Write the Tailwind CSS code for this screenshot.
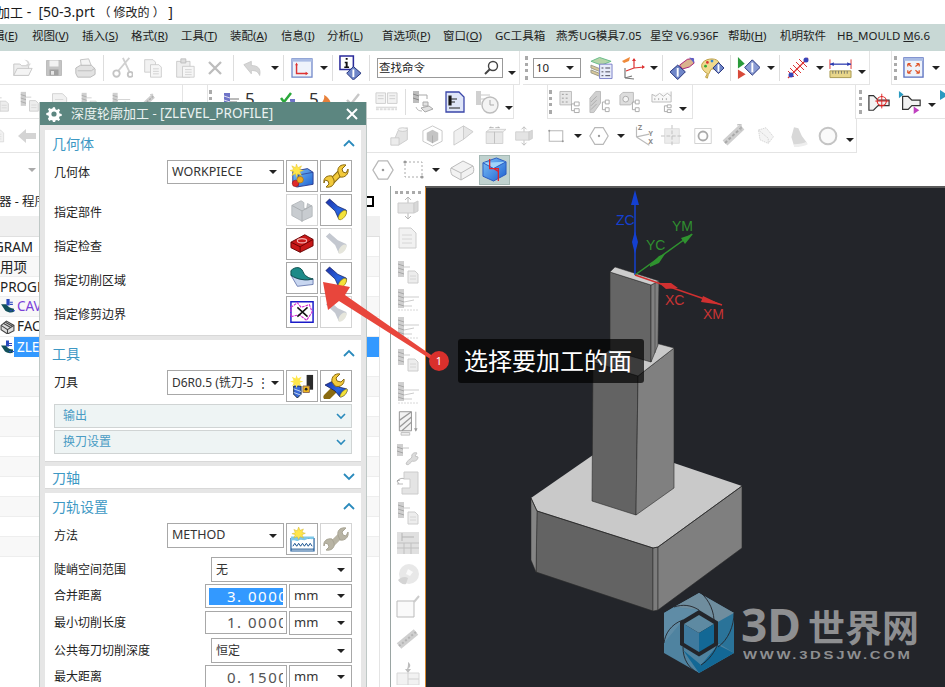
<!DOCTYPE html>
<html lang="zh">
<head>
  <meta charset="UTF-8" />
  <title>深度轮廓加工 - ZLEVEL_PROFILE</title>
  <script src="https://cdn.jsdelivr.net/npm/@tailwindcss/browser@4"></script>
</head>
<body class="[font-family:'Noto_Sans','Noto_Sans_CJK_SC',sans-serif] bg-white text-[#222]">

<!-- icon sheet -->
<svg class="absolute w-0 h-0">
  <defs>
    <linearGradient id="blueFace" x1="0" y1="0" x2="1" y2="1"><stop offset="0" stop-color="#7fc4f8"/><stop offset="1" stop-color="#1c5fd0"/></linearGradient>
    <linearGradient id="lamp" x1="0" y1="0" x2="1" y2="1"><stop offset="0" stop-color="#1a2fa8"/><stop offset=".6" stop-color="#2b66e0"/><stop offset="1" stop-color="#0a1c78"/></linearGradient>
    <symbol id="open" viewBox="0 0 24 24"><path d="M2 8h7l2 2h8v11H2z" fill="#eee" stroke="#c4c4c4"/><path d="M2 21l4-8h17l-4 8z" fill="#f4f4f4" stroke="#c4c4c4"/><path d="M14 3c4 0 6 2 6 5l2-1-3 4-3-3 2 0c0-2-2-4-4-5z" fill="#d8d8d8"/></symbol>
    <symbol id="save" viewBox="0 0 24 24"><path d="M2 2h20v20H2z" fill="#c4c4c4" stroke="#b0b0b0"/><path d="M6 2h12v8H6z" fill="#f2f2f2"/><path d="M6 14h12v8H6z" fill="#a0a0a0"/><path d="M8 16h4v5H8z" fill="#e4e4e4"/></symbol>
    <symbol id="print" viewBox="0 0 24 24"><path d="M7 3l9-1 3 8H8z" fill="#f4f4f4" stroke="#c2c2c2"/><path d="M2 12l5-3h12l4 4v6l-5 3H4l-2-4z" fill="#e2e2e2" stroke="#b8b8b8"/><path d="M4 15h15l4-3" fill="none" stroke="#bbb"/></symbol>
    <symbol id="cut" viewBox="0 0 24 24"><path d="M20 1L8 15M13 1l7 15" stroke="#d0d0d0" stroke-width="2" fill="none"/><circle cx="6" cy="18" r="3.500" fill="none" stroke="#c4c4c4" stroke-width="2"/><circle cx="21" cy="19" r="2.700" fill="none" stroke="#c4c4c4" stroke-width="2"/></symbol>
    <symbol id="copy" viewBox="0 0 24 24"><path d="M2 2h10l3 3v12H2z" fill="#f2f2f2" stroke="#c8c8c8"/><path d="M9 8h10l3 3v12H9z" fill="#f6f6f6" stroke="#c8c8c8"/><path d="M12 13h7M12 16h7M12 19h7" stroke="#ccc"/></symbol>
    <symbol id="paste" viewBox="0 0 24 24"><path d="M2 4h16v19H2z" fill="#eee" stroke="#c4c4c4"/><path d="M7 1h6v5H7z" fill="#ddd" stroke="#bbb"/><path d="M9 10h14v13H9z" fill="#f6f6f6" stroke="#c8c8c8"/><path d="M12 14h8M12 17h8M12 20h8" stroke="#ccc"/></symbol>
    <symbol id="ex" viewBox="0 0 24 24"><path d="M3 3l18 18M21 3L3 21" stroke="#bdbdbd" stroke-width="3.500"/></symbol>
    <symbol id="undo" viewBox="0 0 24 24"><path d="M1 8l9-4v5c7 0 12 3 10 12-2-5-5-6-10-6v4z" fill="#d6d6d6" stroke="#c8c8c8"/></symbol>
    <symbol id="wcs" viewBox="0 0 24 22"><path d="M1 1h22v20H1z" fill="#eef3fb" stroke="#6f86c8" stroke-width="1.400"/><path d="M1 1h22v3H1z" fill="#a9bbe4"/><path d="M6 7v10h11" stroke="#d33" stroke-width="1.600" fill="none"/><path d="M4.500 8l1.500-3 1.500 3zM16 15l3 2-3 2z" fill="#d33"/></symbol>
    <symbol id="info" viewBox="0 0 24 26"><path d="M1 1h14v14H1z" fill="#fff" stroke="#2a2a9a" stroke-width="1.600"/><path d="M7 3h2v2H7zM6 7h3v5h1.500v1.500h-5V12H7V8.500H6z" fill="#111"/><path d="M15 12l8 7-8 7-7-7z" fill="#6f86c8" stroke="#22307a"/><path d="M15 15v8" stroke="#fff" stroke-width="2"/></symbol>
    <symbol id="stack" viewBox="0 0 24 24"><path d="M1 5l9-4 12 4-10 4z" fill="#b5d5a8" stroke="#6b8"/><path d="M1 9l10 4v3L1 12zM1 14l10 4v3L1 17z" fill="#d9c89a" stroke="#998"/><path d="M10 8h13v15H10z" fill="#e8ecfa" stroke="#7a80c8"/><path d="M12 12h2M16 12h5M12 16h2M16 16h5M12 20h2M16 20h5" stroke="#445"/></symbol>
    <symbol id="axes" viewBox="0 0 24 24"><path d="M1 5l8-4-1 4-5 2z" fill="#ef8a3a"/><path d="M13 12V3M13 12l10-1M13 12l-8 3" stroke="#d33" fill="none" stroke-width="1.200"/><path d="M4 12v10M4 22l7-2M4 22l9 1" stroke="#777" fill="none" stroke-width="1.200"/><path d="M11 5l2-3 2 3zM21 9l3 2-3 2z" fill="#d33"/></symbol>
    <symbol id="hand" viewBox="0 0 26 24"><path d="M10 9l8-6 6-1 1 5-5 4-7 2z" fill="#d9b38c" stroke="#a27"/><path d="M20 1l5 1 0 5z" fill="#5a62c8"/><path d="M8 9l8 7-8 8-8-8z" fill="#6f86c8" stroke="#22307a"/><path d="M8 12v9" stroke="#fff" stroke-width="2"/></symbol>
    <symbol id="palette" viewBox="0 0 26 24"><path d="M2 8C4 2 16 0 20 5c3 4-2 9-7 8-2 0-2 4-4 6l-1 4-2-1 2-4C4 16 1 12 2 8z" fill="#f0d98e" stroke="#b89838"/><circle cx="8" cy="6" r="1.500" fill="#d33"/><circle cx="13" cy="4.500" r="1.500" fill="#38c"/><circle cx="6" cy="10" r="1.500" fill="#3a3"/><path d="M20 6l6 6-6 6-6-6z" fill="#6f86c8" stroke="#22307a"/><path d="M20 8v8" stroke="#fff" stroke-width="2"/></symbol>
    <symbol id="play" viewBox="0 0 24 24"><path d="M1 1l7 7-7 5z" fill="#2a9a3a"/><path d="M1 14l8 5-8 5z" fill="#d84a3a"/><path d="M16 4l8 8-8 8-8-8z" fill="#8a9cd4" stroke="#22307a"/><path d="M16 7v10" stroke="#fff" stroke-width="2"/></symbol>
    <symbol id="line" viewBox="0 0 24 24"><path d="M2 22L22 2" stroke="#d33" stroke-width="1.300"/><path d="M4 12l8 8M7 9l8 8M10 6l8 8M13 3l8 8M2 15l6 6" stroke="#d33"/><circle cx="5" cy="19" r="2.500" fill="#3a44b8"/><circle cx="20" cy="4" r="2.500" fill="#3a44b8"/></symbol>
    <symbol id="ruler" viewBox="0 0 24 24"><path d="M1 3v10M23 3v10" stroke="#d33"/><path d="M1 8h22" stroke="#2a3ab0" stroke-width="1.300"/><path d="M1 8l4-2v4zM23 8l-4-2v4z" fill="#2a3ab0"/><path d="M1 15h22v7H1z" fill="#e8d68a" stroke="#a89a50"/><path d="M4 15v3M7 15v3M10 15v3M13 15v3M16 15v3M19 15v3" stroke="#776"/></symbol>
    <symbol id="fit" viewBox="0 0 22 22"><path d="M1 1h20v20H1z" fill="#eef3fb" stroke="#5a70c0" stroke-width="1.400"/><path d="M1 1h20v3H1z" fill="#a9bbe4"/><path d="M5 7l4 3M17 7l-4 3M5 17l4-3M17 17l-4-3M5 7h3M5 7v3M17 7h-3M17 7v3M5 17h3M5 17v-3M17 17h-3M17 17v-3" stroke="#e0552a" stroke-width="1.300" fill="none"/></symbol>
    <!-- grey family for disabled commands -->
    <symbol id="gmill" viewBox="0 0 24 24"><path d="M2 1h6v19H2z" fill="#cfcfcf"/><path d="M2 4l6 2M2 8l6 2M2 12l6 2M2 16l6 2" stroke="#a8a8a8"/><path d="M8 9h15M8 14l10-2M8 18h8" stroke="#cdcdcd"/><path d="M2 22h20" stroke="#d8d8d8" stroke-dasharray="2 1"/></symbol>
    <symbol id="gmilldoc" viewBox="0 0 24 24"><path d="M2 1h6v16H2z" fill="#cfcfcf"/><path d="M2 4l6 2M2 8l6 2M2 12l6 2" stroke="#a8a8a8"/><path d="M8 7h6" stroke="#cdcdcd"/><path d="M12 11h7l3 3v9H12z" fill="#ededed" stroke="#cdcdcd"/><path d="M14 16h6M14 19h6" stroke="#d6d6d6"/></symbol>
    <symbol id="gtree" viewBox="0 0 24 24"><path d="M1 1h12v14H1z" fill="#e6e6e6" stroke="#bbb"/><path d="M3 4h2M7 4h2M3 8h2M7 8h2M3 12h2M7 12h2" stroke="#999"/><path d="M16 12h5v4h-5zM16 19h5v4h-5z" fill="#fff" stroke="#aaa"/><path d="M13 14v7h3M13 14h3" stroke="#aaa" fill="none"/></symbol>
    <symbol id="gdoc" viewBox="0 0 24 24"><path d="M3 2h12l5 5v15H3z" fill="#f1f1f1" stroke="#cdcdcd"/><path d="M6 9h10M6 13h10M6 17h10" stroke="#d6d6d6"/></symbol>
    <symbol id="gglass" viewBox="0 0 24 24"><path d="M1 3h10v11H1zM13 3h10v11H13z" fill="#f2f2f2" stroke="#cfcfcf"/><path d="M3 6h6M3 9h6M15 6h6M15 9h6M1 18h22" stroke="#cfcfcf"/><path d="M1 20h22" stroke="#ddd" stroke-dasharray="3 1" stroke-width="2"/></symbol>
    <symbol id="gclock" viewBox="0 0 24 24"><path d="M1 1h5v14H1z" fill="#d0d0d0"/><path d="M6 5h9M6 9h6" stroke="#c8c8c8"/><circle cx="15" cy="15" r="8" fill="#f4f4f4" stroke="#bdbdbd" stroke-width="1.400"/><path d="M15 10v5h4" stroke="#aaa" fill="none"/></symbol>
    <symbol id="gcyl" viewBox="0 0 24 24"><path d="M10 6l10-3v13l-8 5c-4 1-7-1-7-3z" fill="#e4e4e4" stroke="#ccc"/><ellipse cx="15" cy="5" rx="5" ry="2" fill="#f2f2f2" stroke="#ccc"/><path d="M2 14h9v8H2z" fill="#ececec" stroke="#ccc"/></symbol>
    <symbol id="gcube" viewBox="0 0 24 24"><path d="M2 7l10-5 10 5v11l-10 5-10-5z" fill="none" stroke="#c8c8c8"/><path d="M6 9l6-3 6 3v8l-6 3-6-3z" fill="#c4c4c4"/><path d="M12 12v8" stroke="#aaa"/></symbol>
    <symbol id="gslab" viewBox="0 0 24 24"><path d="M2 8l10-6v14l-10 6z" fill="#f0f0f0" stroke="#ccc"/><path d="M12 2l10 6-10 8z" fill="#e6e6e6" stroke="#ccc"/></symbol>
    <symbol id="gbox2" viewBox="0 0 24 24"><path d="M2 7h20v14H2z" fill="#e8e8e8" stroke="#ccc"/><path d="M2 7l4-3h20l-4 3z" fill="#f2f2f2" stroke="#ccc"/><path d="M12 7v14" stroke="#bbb"/><path d="M6 2h5M6 2l2-1M18 2h-5M18 2l-2-1" stroke="#aaa"/></symbol>
    <symbol id="gbox3" viewBox="0 0 24 24"><path d="M12 1v22M9 4l3-3 3 3M9 20l3 3 3-3" stroke="#b8b8b8" fill="none"/><path d="M2 7h16v10H2z" fill="#e4e4e4" stroke="#ccc"/><path d="M18 7l4-2v10l-4 2z" fill="#d8d8d8" stroke="#ccc"/></symbol>
    <symbol id="grect" viewBox="0 0 24 24"><path d="M3 5h18v14H3z" fill="none" stroke="#b8b8b8" stroke-width="1.400"/><circle cx="3" cy="5" r="1.300" fill="#999"/><circle cx="21" cy="19" r="1.300" fill="#999"/></symbol>
    <symbol id="ghex" viewBox="0 0 24 24"><path d="M7 2h10l6 10-6 10H7L1 12z" fill="none" stroke="#b8b8b8" stroke-width="1.400"/><circle cx="12" cy="12" r="1.400" fill="#999"/></symbol>
    <symbol id="gxyz" viewBox="0 0 24 24"><path d="M6 13V2M6 13l14-3M6 13l14 9" stroke="#bbb" stroke-width="1.300" fill="none"/></symbol>
    <symbol id="gpoint" viewBox="0 0 24 24"><path d="M4 4h16v16H4z" fill="#ececec" stroke="#ddd"/><path d="M12 0v24M0 12h24" stroke="#bbb" stroke-dasharray="4 2"/></symbol>
    <symbol id="gring" viewBox="0 0 24 24"><path d="M1 2h22v20H1z" fill="none" stroke="#c4c4c4"/><circle cx="12" cy="12" r="6" fill="none" stroke="#aaa" stroke-width="2.400"/></symbol>
    <symbol id="gtext" viewBox="0 0 24 24"><path d="M3 19L20 3" stroke="#cfcfcf" stroke-width="7"/><path d="M3 19L20 3" stroke="#a8a8a8" stroke-width="2" stroke-dasharray="3 2"/><path d="M15 1l4-1v7" stroke="#bbb" fill="none"/></symbol>
    <symbol id="gwire" viewBox="0 0 24 24"><path d="M2 4l10-3 10 12-7 9-11-5z" fill="#f4f4f4" stroke="#ccc" stroke-dasharray="2 1"/><path d="M2 4l13 11v7" stroke="#ccc" fill="none" stroke-dasharray="2 1"/></symbol>
    <symbol id="glamp" viewBox="0 0 24 24"><path d="M8 2l5 1 4 9 6 8c-5 3-10 3-15 3l-3-10z" fill="#d8d8d8"/><path d="M8 23c5 0 10 0 15-3" stroke="#eee" stroke-width="3" fill="none"/></symbol>
    <symbol id="gcircle" viewBox="0 0 24 24"><circle cx="12" cy="12" r="10" fill="#fafafa" stroke="#c4c4c4" stroke-width="2.400"/></symbol>
    <symbol id="gtable" viewBox="0 0 24 24"><path d="M1 1h22v22H1z" fill="#e0e0e0"/><path d="M1 12h22M1 17h22M8 12v11M15 12v11" stroke="#c0c0c0"/><path d="M6 2v8M6 6h12" stroke="#b4b4b4"/></symbol>
    <symbol id="gglobe" viewBox="0 0 24 24"><circle cx="13" cy="11" r="10" fill="#e8e8e8"/><path d="M2 17c3-3 7-4 10-2l-2 6c-3 1-6-1-8-4z" fill="#d4d4d4"/><path d="M12 6l5 3-3 4-4-2z" fill="#fafafa"/></symbol>
    <symbol id="gapen" viewBox="0 0 24 24"><path d="M1 6h17v16H1z" fill="#fafafa" stroke="#bbb"/><path d="M18 7l5-6" stroke="#ccc" stroke-width="2"/></symbol>
    <symbol id="gbar" viewBox="0 0 24 24"><path d="M3 18L20 4" stroke="#cfcfcf" stroke-width="7"/><path d="M3 18L20 4" stroke="#b4b4b4" stroke-dasharray="2 2" stroke-width="2"/></symbol>
    <symbol id="gfold" viewBox="0 0 24 24"><path d="M1 12h22v12H1z" fill="#f2f2f2" stroke="#d8d8d8"/><path d="M12 12v12M12 18h11" stroke="#d0d0d0"/><path d="M12 1c3 2 3 5 0 7l3 0-3 4-3-4h2c1-2 1-4 1-7z" fill="#bdbdbd"/></symbol>
    <symbol id="gwrmill" viewBox="0 0 24 24"><path d="M1 1h6v12H1z" fill="#cfcfcf"/><path d="M1 4l6 2M1 8l6 2" stroke="#a4a4a4"/><path d="M7 5h6" stroke="#c4c4c4"/><path d="M10 21c1-4 4-4 6-7-1-3 2-5 5-4l-2 3 3 1c0 3-3 5-6 4-2 2-3 5-6 3z" fill="#dcdcdc" stroke="#c4c4c4"/></symbol>
    <symbol id="gmach" viewBox="0 0 24 24"><path d="M8 1h14v22H6V17h8V8H8z" fill="#e4e4e4" stroke="#ccc"/><path d="M1 10c3-3 6-3 7-2M1 10l2 3M1 10l3-1" stroke="#aaa" fill="none"/><path d="M1 13h6" stroke="#bbb"/></symbol>
    <symbol id="ghatch" viewBox="0 0 24 30"><path d="M2 2h14v22H2z" fill="#f2f2f2" stroke="#888"/><path d="M2 12L16 2M2 20L16 8M5 24l11-10" stroke="#999" stroke-width="1.500"/><path d="M4 26h10v3H4z" fill="#eee" stroke="#bbb"/><path d="M21 2v22" stroke="#999"/><path d="M19 21l2 4 2-4z" fill="#999"/></symbol>
    <!-- coloured dialog buttons -->
    <symbol id="geoNew" viewBox="0 0 26 26"><path d="M3 8l16-3 6 4v13l-18 3-4-4z" fill="url(#blueFace)" stroke="#2a3a90"/><path d="M3 8l6 4 16-3M9 12v13" stroke="#2a3a90" fill="none" stroke-width=".8"/><path d="M7 0l1.500 4 4-2-2 4 4 1-4 1.500 2 4-4-2-1.500 4L6 10.500l-4 2 2-4L0 7l4-1-2-4 4 2z" fill="#ffe64a" stroke="#e8c020" stroke-width=".5"/><circle cx="6" cy="21" r="3.500" fill="#e02a2a" stroke="#901010" stroke-width=".6"/><circle cx="11" cy="17" r="3.500" fill="#f0a81e" stroke="#a06a00" stroke-width=".6"/></symbol>
    <symbol id="wrench" viewBox="0 0 26 26"><path d="M7 20L17 10" stroke="#8a6a10" stroke-width="6.500"/><path d="M7 20L17 10" stroke="#f2c93a" stroke-width="4.500"/><path d="M15 9c-1-5 3-8 8-7l-4 4 1 3 3 1 2-4c1 5-3 9-8 8z" fill="#f2c93a" stroke="#8a6a10"/><path d="M11 17c1 5-3 8-8 7l3-3-1-3-3-1-1 3c-1-5 3-8 8-7z" fill="#f2c93a" stroke="#8a6a10"/></symbol>
    <symbol id="wrenchG" viewBox="0 0 26 26"><path d="M7 20L17 10" stroke="#b8b4a4" stroke-width="6"/><path d="M15 9c-1-5 3-8 8-7l-4 4 1 3 3 1 2-4c1 5-3 9-8 8z" fill="#b8b4a4" stroke="#a8a494"/><path d="M11 17c1 5-3 8-8 7l3-3-1-3-3-1-1 3c-1-5 3-8 8-7z" fill="#b8b4a4" stroke="#a8a494"/></symbol>
    <symbol id="blockG" viewBox="0 0 26 26"><path d="M2 8l10-5 3 2v6l3 1 1-6 5 3v11l-11 5-11-6z" fill="#c8ccd0" stroke="#b4b8bc"/><path d="M2 8l11 6v12M13 14l11-6" stroke="#a8acb0" fill="none"/></symbol>
    <symbol id="lamp1" viewBox="0 0 26 26"><path d="M2 5l4-4 9 8 9 4c2 3-3 10-8 10l-4-9z" fill="url(#lamp)" stroke="#0a1454" stroke-width=".7"/><ellipse cx="20" cy="18.500" rx="6" ry="3" transform="rotate(-52 20 18.500)" fill="#f4e23a" stroke="#a89410" stroke-width=".7"/></symbol>
    <symbol id="lamp0" viewBox="0 0 26 26"><path d="M2 5l4-4 9 8 9 4c2 3-3 10-8 10l-4-9z" fill="#c4c8d0"/><ellipse cx="20" cy="18.500" rx="6" ry="3" transform="rotate(-52 20 18.500)" fill="#e6e6dc"/></symbol>
    <symbol id="redPart" viewBox="0 0 26 26"><path d="M1 11l15-8 9 5v7l-14 7-10-5z" fill="#c81818" stroke="#600"/><path d="M1 11l10 5 14-8M11 16v6" stroke="#600" fill="none"/><ellipse cx="13" cy="9.500" rx="5" ry="2.300" fill="none" stroke="#f4b0b0" stroke-width="1.300"/></symbol>
    <symbol id="surf" viewBox="0 0 26 26"><path d="M1 10L8 22L25 20V14C18 16 8 15 1 10z" fill="#c8d6f0" stroke="#6a7cb0"/><path d="M1 10V5C6 0 12 1 14 6C16 11 20 13 25 14C18 16 8 15 1 10z" fill="#1c8a88" stroke="#0c4a48"/></symbol>
    <symbol id="trim" viewBox="0 0 26 26"><path d="M1 2h24v22H1z" fill="#fff" stroke="#1a1ac8" stroke-width="1.600"/><path d="M1 8l7-5 4 5 9-3 3 8-6 9-8-6-9 2z" fill="none" stroke="#d028d0" stroke-width="1.200" stroke-dasharray="3 1"/><path d="M8 8l11 10M19 8L8 18" stroke="#111" stroke-width="1.600"/></symbol>
    <symbol id="toolNew" viewBox="0 0 26 26"><path d="M18 1h7v16h-7z" fill="#2a2a2a"/><path d="M14 13h7v7h-7z" fill="#f2b81e" stroke="#865"/><circle cx="17.500" cy="16.500" r="1.500" fill="#222"/><path d="M4 13h8v9l-4 4-4-4z" fill="#3a6ad8" stroke="#123"/><path d="M4 16l8 3M4 20l8 3" stroke="#cde"/><path d="M7 1l1.500 4 4-2-2 4 4 1-4 1.500 2 4-4-2-1.500 4L6 11.500l-4 2 2-4L0 8l4-1-2-4 4 2z" fill="#ffe64a"/></symbol>
    <symbol id="toolEdit" viewBox="0 0 26 26"><path d="M4 24l9-9" stroke="#8a6a10" stroke-width="7" stroke-linecap="round"/><path d="M2 12l10-5 4 7 8 2c1 3-3 8-7 8l-5-6z" fill="url(#lamp)" stroke="#0a1454" stroke-width=".7"/><path d="M9 9C8 4 12 0 17 1l-4 4 1 3 4 1 3-3c1 5-4 9-9 7z" fill="#f2c93a" stroke="#8a6a10"/><path d="M24 16c1 3-3 8-7 8 0-3 3-7 7-8z" fill="#f4e23a" stroke="#a89410" stroke-width=".5"/></symbol>
    <symbol id="method" viewBox="0 0 26 26"><path d="M1 12h24v13H1z" fill="#fff" stroke="#1c5a9a" stroke-width="1.200"/><path d="M1 15c3-3 5 1 8-1s5 1 8-1 5 1 8-1v-2H1z" fill="#7ec8e8"/><path d="M3 20l2-3 2 3 2-3 2 3 2-3 2 3 2-3 2 3 2-3 2 3M1 23h24" stroke="#0c4a8a" fill="none"/><path d="M9 0l1.500 3.500 3.500-1.500-1.500 3.500 3.500 1-3.500 1.500 1.500 3.500-3.500-1.500L9 13 7.500 10 4 11.500 5.500 8 2 7l3.500-1L4 2.500 7.500 4z" fill="#ffe64a" stroke="#c8a818" stroke-width=".4"/></symbol>
    <symbol id="camOp" viewBox="0 0 14 14"><path d="M1 5l4 6c3 2 6 2 8 1v-3c-3 0-5-1-7-4z" fill="#12505a"/><path d="M6 0h3v6H6z" fill="#2a4ac0"/><path d="M9 3h3M9 5h3" stroke="#2a4ac0"/><path d="M9 11h5" stroke="#2a4ac0" stroke-dasharray="2 1"/></symbol>
    <symbol id="camFace" viewBox="0 0 14 14"><path d="M1 6l5-4 7 4v5l-6 3-6-4z" fill="#ddd" stroke="#444"/><path d="M1 6l6 4 6-4M7 10v4M3 4l7 4M5 3l7 4" stroke="#444" fill="none"/></symbol>
    <symbol id="blueCube" viewBox="0 0 26 26"><path d="M1 6l14-5 10 4v13l-13 7L1 20z" fill="url(#blueFace)" stroke="#2a5ac0"/><path d="M1 6l11 6 13-7" fill="#9fd4fa" stroke="#2a5ac0"/><path d="M8 2v10h9v13M12 12l5 3" stroke="#e0222a" stroke-width="1.300" fill="none"/></symbol>
    <symbol id="nozzle" viewBox="0 0 24 24"><path d="M1 5h5l5 5h12v6H11l-5 5H1z" fill="#f2f2f2" stroke="#333" stroke-width="1.300"/><circle cx="15" cy="11" r="5" fill="none" stroke="#d22" stroke-width="1.200"/><path d="M15 3v16M8 11h15" stroke="#d22"/></symbol>
    <symbol id="nozzle2" viewBox="0 0 26 26"><path d="M1 1l5 4-5 4z" fill="#2a9ac0"/><path d="M5 7h6l4 4h9v6h-9l-4 4H5z" fill="#f2f2f2" stroke="#333" stroke-width="1.300"/><path d="M17 18l6 4-6 4z" fill="#c040c0"/></symbol>
  </defs>
</svg>

<div class="relative w-[945px] h-[687px] overflow-hidden flex flex-col bg-white">

  <!-- title bar -->
  <div class="h-[24px] shrink-0 -ml-[3px] text-[14px] leading-[23px] whitespace-pre text-[#1a1a1a]"><span class="text-[13px]">加工</span> -  [50-3.prt <span class="text-[12px]">（ 修改的 ）</span> ]</div>

  <!-- menu bar -->
  <div class="h-[27px] shrink-0 bg-[#c8d8d5] flex items-center pb-[3px] whitespace-nowrap text-[11.5px] text-[#222]">
    <span class="w-[39px] -ml-[7px]">辑(<u>E</u>)</span>
    <span class="w-[50px]">视图(<u>V</u>)</span>
    <span class="w-[49px]">插入(<u>S</u>)</span>
    <span class="w-[50px]">格式(<u>R</u>)</span>
    <span class="w-[49px]">工具(<u>T</u>)</span>
    <span class="w-[51px]">装配(<u>A</u>)</span>
    <span class="w-[46px]">信息(<u>I</u>)</span>
    <span class="w-[55px]">分析(<u>L</u>)</span>
    <span class="w-[61px]">首选项(<u>P</u>)</span>
    <span class="w-[52px]">窗口(<u>O</u>)</span>
    <span class="w-[61px]">GC工具箱</span>
    <span class="w-[94px]">燕秀UG模具7.05</span>
    <span class="w-[78px]">星空 V6.936F</span>
    <span class="w-[52px]">帮助(<u>H</u>)</span>
    <span class="w-[57px]">机明软件</span>
    <span>HB_MOULD <u>M</u>6.6</span>
  </div>

  <!-- toolbar row 1 -->
  <div class="h-[34px] shrink-0 flex items-stretch">
    <div class="w-[520px] flex items-center border-r border-b border-[#e4e4e4]">
      <svg class="w-[21px] h-[21px] ml-[12px] shrink-0"><use href="#open"/></svg>
      <svg class="w-[18px] h-[18px] ml-[12px] shrink-0"><use href="#save"/></svg>
      <svg class="w-[24px] h-[22px] ml-[10px] shrink-0"><use href="#print"/></svg>
      <span class="w-px h-[26px] ml-[6px] bg-[#ddd]"></span>
      <svg class="w-[22px] h-[22px] ml-[7px] shrink-0"><use href="#cut"/></svg>
      <svg class="w-[20px] h-[20px] ml-[10px] shrink-0"><use href="#copy"/></svg>
      <svg class="w-[20px] h-[20px] ml-[12px] shrink-0"><use href="#paste"/></svg>
      <svg class="w-[16px] h-[16px] ml-[12px] shrink-0"><use href="#ex"/></svg>
      <span class="w-px h-[26px] ml-[10px] bg-[#ddd]"></span>
      <svg class="w-[20px] h-[20px] ml-[9px] shrink-0"><use href="#undo"/></svg>
      <span class="w-0 h-0 ml-[8px] border-x-[4px] border-t-[4px] border-x-transparent border-t-[#222]"></span>
      <span class="w-px h-[26px] ml-[4px] bg-[#ddd]"></span>
      <svg class="w-[22px] h-[20px] ml-[7px] shrink-0"><use href="#wcs"/></svg>
      <span class="w-0 h-0 ml-[7px] border-x-[4px] border-t-[4px] border-x-transparent border-t-[#222]"></span>
      <span class="w-px h-[26px] ml-[4px] bg-[#ddd]"></span>
      <svg class="w-[23px] h-[25px] ml-[6px] shrink-0"><use href="#info"/></svg>
      <span class="w-px h-[26px] ml-[7px] bg-[#ddd]"></span>
      <div class="w-[126px] h-[20px] ml-[7px] flex items-center justify-between border border-[#999] pl-[1px] pr-[3px] text-[11.5px] text-[#222]">
        查找命令
        <svg class="w-[16px] h-[16px]" viewBox="0 0 16 16"><circle cx="10" cy="6" r="4.500" fill="#fff" stroke="#444" stroke-width="1.400"/><path d="M7 9l-5 5" stroke="#444" stroke-width="2"/></svg>
      </div>
      <span class="w-0 h-0 ml-[5px] mt-[10px] border-x-[4px] border-t-[4px] border-x-transparent border-t-[#222]"></span>
    </div>
    <div class="w-[347px] ml-[3px] flex items-center border-r border-b border-[#e4e4e4]">
      <span class="w-0 h-[24px] ml-[2px] border-l-[3px] border-dotted border-[#aaa]"></span>
      <div class="w-[48px] h-[20px] ml-[5px] flex items-center justify-between border border-[#999] pl-[2px] pr-[6px] text-[11.5px]">
        10
        <span class="w-0 h-0 border-x-[4px] border-t-[4px] border-x-transparent border-t-[#222]"></span>
      </div>
      <svg class="w-[23px] h-[24px] ml-[9px] shrink-0"><use href="#stack"/></svg>
      <svg class="w-[24px] h-[24px] ml-[8px] shrink-0"><use href="#axes"/></svg>
      <span class="w-0 h-0 ml-[5px] border-x-[4px] border-t-[4px] border-x-transparent border-t-[#222]"></span>
      <span class="w-px h-[26px] ml-[4px] bg-[#ddd]"></span>
      <svg class="w-[25px] h-[24px] ml-[7px] shrink-0"><use href="#hand"/></svg>
      <svg class="w-[24px] h-[24px] ml-[5px] shrink-0"><use href="#palette"/></svg>
      <span class="w-px h-[26px] ml-[6px] bg-[#ddd]"></span>
      <svg class="w-[23px] h-[23px] ml-[6px] shrink-0"><use href="#play"/></svg>
      <span class="w-0 h-0 ml-[7px] border-x-[4px] border-t-[4px] border-x-transparent border-t-[#222]"></span>
      <span class="w-px h-[26px] ml-[4px] bg-[#ddd]"></span>
      <svg class="w-[24px] h-[24px] ml-[6px] shrink-0"><use href="#line"/></svg>
      <span class="w-0 h-0 ml-[6px] border-x-[4px] border-t-[4px] border-x-transparent border-t-[#222]"></span>
      <svg class="w-[23px] h-[24px] ml-[5px] shrink-0"><use href="#ruler"/></svg>
      <span class="w-0 h-0 ml-[6px] mt-[8px] border-x-[4px] border-t-[4px] border-x-transparent border-t-[#222]"></span>
    </div>
    <div class="flex-1 ml-[21px] flex items-center border-b border-l border-[#e4e4e4]">
      <span class="w-0 h-[24px] ml-[2px] border-l-[3px] border-dotted border-[#aaa]"></span>
      <svg class="w-[21px] h-[21px] ml-[6px] shrink-0"><use href="#fit"/></svg>
      <span class="w-0 h-0 ml-[8px] border-x-[4px] border-t-[4px] border-x-transparent border-t-[#222]"></span>
    </div>
  </div>

  <!-- toolbar row 2 -->
  <div class="h-[34px] shrink-0 flex items-stretch">
    <div class="w-[183px] flex items-center border-r border-b border-[#e4e4e4]">
      <svg class="w-[20px] h-[20px] -ml-[10px] shrink-0"><use href="#gmilldoc"/></svg>
      <svg class="w-[21px] h-[21px] ml-[9px] shrink-0"><use href="#gmilldoc"/></svg>
      <svg class="w-[20px] h-[20px] ml-[10px] shrink-0"><use href="#gdoc"/></svg>
      <svg class="w-[20px] h-[20px] ml-[10px] shrink-0"><use href="#gmilldoc"/></svg>
      <svg class="w-[20px] h-[20px] ml-[11px] shrink-0"><use href="#gmill"/></svg>
      <svg class="w-[16px] h-[18px] ml-[9px] shrink-0"><use href="#gtext"/></svg>
    </div>
    <div class="w-[307px] ml-[24px] flex items-center border-r border-b border-l border-[#e4e4e4]">
      <span class="w-0 h-[24px] ml-[1px] border-l-[3px] border-dotted border-[#aaa]"></span>
      <svg class="w-[18px] h-[20px] ml-[10px] shrink-0" viewBox="0 0 18 20"><path d="M2 1h6v17H2z" fill="#6f74c8"/><path d="M2 4l6 2M2 8l6 2M2 12l6 2" stroke="#dde"/><path d="M8 7h9M8 10h7M8 14h6" stroke="#777"/></svg>
      <span class="w-[14px] ml-[5px] mb-[6px] text-[17px] leading-none text-[#333]">5</span>
      <svg class="w-[19px] h-[22px] ml-[21px] shrink-0" viewBox="0 0 19 22"><path d="M1 7l3 4 7-9" stroke="#2aa83a" stroke-width="2.500" fill="none"/><path d="M10 8h5v13h-5z" fill="#6f74c8"/><path d="M10 11l5 2M10 15l5 2" stroke="#dde"/><path d="M3 18h16" stroke="#cdb878"/></svg>
      <span class="w-[10px] ml-[10px] mb-[6px] text-[17px] leading-none text-[#333]">5</span>
      <svg class="w-[13px] h-[18px] shrink-0" viewBox="0 0 13 18"><path d="M1 12c3-4 5-6 4-10 4 2 7 6 7 10 0 3-2 5-5 5s-6-2-6-5z" fill="#e8803a"/><path d="M4 10h5v6H4z" fill="#aab"/></svg>
      <svg class="w-[17px] h-[20px] ml-[14px] shrink-0" viewBox="0 0 17 20"><path d="M1 8l4 4 8-10" stroke="#c8c8c8" stroke-width="2.400" fill="none"/><path d="M5 14h11v5H5z" fill="#e8e8e8" stroke="#ccc"/></svg>
      <svg class="w-[23px] h-[23px] ml-[12px] shrink-0"><use href="#gglass"/></svg>
      <span class="w-px h-[26px] ml-[7px] bg-[#ddd]"></span>
      <svg class="w-[22px] h-[24px] ml-[6px] shrink-0" viewBox="0 0 22 24"><path d="M1 1h6v12H1z" fill="#bdbdbd"/><path d="M1 4l6 2M1 8l6 2" stroke="#8a8a8a"/><path d="M7 5h8v4" stroke="#aaa" fill="none"/><path d="M4 17c1 3 3 4 6 4" stroke="#bbb" fill="none"/><path d="M11 12h5v4h-5zM9 18l8-2 4 3-8 3z" fill="#e2e2e2" stroke="#aaa"/></svg>
      <svg class="w-[21px] h-[24px] ml-[10px] shrink-0" viewBox="0 0 21 24"><path d="M2 2h13l5 5v15H2z" fill="#dfe6f8" stroke="#3a46a8" stroke-width="1.300"/><path d="M5 6h2v9H5zM7 9h6M7 12h4M5 18h11" stroke="#222" stroke-width="1.200"/></svg>
      <svg class="w-[24px] h-[24px] ml-[10px] shrink-0"><use href="#gclock"/></svg>
      <span class="w-0 h-0 ml-[6px] mt-[12px] border-x-[4px] border-t-[4px] border-x-transparent border-t-[#222]"></span>
    </div>
    <div class="w-[146px] ml-[33px] flex items-center border-r border-b border-l border-[#e4e4e4]">
      <span class="w-0 h-[24px] ml-[1px] border-l-[3px] border-dotted border-[#aaa]"></span>
      <svg class="w-[23px] h-[24px] ml-[7px] shrink-0"><use href="#gtree"/></svg>
      <svg class="w-[23px] h-[24px] ml-[7px] shrink-0" viewBox="0 0 24 24"><path d="M1 8l6-7h5v12l-7 10H1z" fill="#d0d0d0" stroke="#bbb"/><path d="M2 12l6-6M2 16l6-6M2 20l6-6" stroke="#aaa"/><path d="M17 10h4v4h-4zM17 18h4v4h-4zM14 12h3M14 12v8h3" fill="none" stroke="#aaa"/></svg>
      <svg class="w-[23px] h-[24px] ml-[7px] shrink-0" viewBox="0 0 24 24"><path d="M1 5l3-3h11v10l-3 3H1z" fill="#ddd" stroke="#bbb"/><circle cx="7" cy="9" r="3" fill="#f4f4f4" stroke="#aaa"/><path d="M17 10h4v4h-4zM17 18h4v4h-4zM14 12h3M14 12v8h3" fill="none" stroke="#aaa"/></svg>
      <svg class="w-[23px] h-[24px] ml-[9px] shrink-0" viewBox="0 0 24 24"><path d="M1 4l4 2 4-3 4 3 4-3 4 3V1M1 4v8h20V6" fill="#f8f8f8" stroke="#bbb"/><path d="M4 8v2M8 8v2M12 8v2M16 8v2" stroke="#aaa"/><path d="M17 15h4v3h-4zM17 20h4v3h-4zM14 16h3M14 16v6h3" fill="none" stroke="#aaa"/></svg>
      <span class="w-0 h-0 ml-[5px] mt-[14px] border-x-[4px] border-t-[4px] border-x-transparent border-t-[#222]"></span>
    </div>
    <div class="flex-1 ml-[162px] flex items-center border-b border-l border-[#e4e4e4] overflow-hidden">
      <span class="w-0 h-[24px] ml-[3px] border-l-[3px] border-dotted border-[#aaa] shrink-0"></span>
      <svg class="w-[22px] h-[22px] ml-[6px] shrink-0"><use href="#nozzle"/></svg>
      <svg class="w-[24px] h-[24px] ml-[8px] shrink-0"><use href="#nozzle2"/></svg>
      <span class="w-0 h-0 ml-[6px] mt-[6px] shrink-0 border-x-[4px] border-t-[4px] border-x-transparent border-t-[#222]"></span>
      <svg class="w-[8px] h-[10px] ml-[4px] mb-[14px] shrink-0" viewBox="0 0 8 10"><path d="M0 0l8 5-8 5z" fill="#2a9ac0"/></svg>
    </div>
  </div>

  <!-- toolbar row 3 -->
  <div class="h-[34px] shrink-0 flex items-stretch">
    <div class="w-[857px] flex items-center border-r border-b border-[#e4e4e4]">
      <svg class="w-[14px] h-[22px] -ml-[8px] shrink-0"><use href="#gdoc"/></svg>
      <svg class="w-[18px] h-[16px] ml-[12px] shrink-0" viewBox="0 0 18 16"><path d="M0 8l8-7v4h10v6H8v4z" fill="#d4d4d4"/></svg>
      <svg class="w-[22px] h-[22px] ml-[353px] shrink-0"><use href="#gcyl"/></svg>
      <svg class="w-[23px] h-[23px] ml-[10px] shrink-0"><use href="#gcube"/></svg>
      <svg class="w-[23px] h-[23px] ml-[8px] shrink-0"><use href="#gslab"/></svg>
      <svg class="w-[23px] h-[20px] ml-[8px] shrink-0"><use href="#gbox2"/></svg>
      <svg class="w-[20px] h-[22px] ml-[8px] shrink-0"><use href="#gbox3"/></svg>
      <svg class="w-[18px] h-[18px] ml-[13px] shrink-0"><use href="#grect"/></svg>
      <span class="w-0 h-0 ml-[9px] border-x-[4px] border-t-[4px] border-x-transparent border-t-[#222]"></span>
      <svg class="w-[20px] h-[20px] ml-[7px] shrink-0"><use href="#ghex"/></svg>
      <span class="w-0 h-0 ml-[8px] border-x-[4px] border-t-[4px] border-x-transparent border-t-[#222]"></span>
      <div class="relative w-[22px] h-[24px] ml-[6px] shrink-0">
        <svg class="w-[22px] h-[24px]"><use href="#gxyz"/></svg>
        <span class="absolute left-[7px] -top-[1px] text-[7px] font-bold text-[#888]">Z</span>
        <span class="absolute right-0 top-[5px] text-[7px] font-bold text-[#888]">Y</span>
        <span class="absolute right-0 bottom-0 text-[7px] font-bold text-[#888]">X</span>
      </div>
      <svg class="w-[22px] h-[22px] ml-[8px] shrink-0"><use href="#gpoint"/></svg>
      <svg class="w-[20px] h-[18px] ml-[10px] shrink-0"><use href="#gring"/></svg>
      <svg class="w-[24px] h-[24px] ml-[9px] shrink-0"><use href="#gtext"/></svg>
      <svg class="w-[18px] h-[20px] ml-[11px] shrink-0"><use href="#gwire"/></svg>
      <svg class="w-[21px] h-[22px] ml-[12px] shrink-0"><use href="#glamp"/></svg>
      <svg class="w-[20px] h-[20px] ml-[10px] shrink-0"><use href="#gcircle"/></svg>
      <span class="w-0 h-0 ml-[8px] mt-[8px] border-x-[4px] border-t-[4px] border-x-transparent border-t-[#222]"></span>
    </div>
  </div>

  <!-- toolbar row 4 -->
  <div class="h-[33px] shrink-0 flex items-center">
    <span class="w-0 h-0 ml-[28px] border-x-[4px] border-t-[4px] border-x-transparent border-t-[#aaa]"></span>
    <svg class="w-[22px] h-[22px] ml-[336px] shrink-0"><use href="#ghex"/></svg>
    <svg class="w-[21px] h-[21px] ml-[9px] shrink-0" viewBox="0 0 21 21"><path d="M2 3h17v15H2z" fill="none" stroke="#aaa" stroke-dasharray="2 2"/><circle cx="2" cy="3" r="1.600" fill="#999"/><circle cx="19" cy="18" r="1.600" fill="#999"/></svg>
    <span class="w-0 h-0 ml-[8px] border-x-[4px] border-t-[4px] border-x-transparent border-t-[#222]"></span>
    <svg class="w-[25px] h-[22px] ml-[10px] shrink-0" viewBox="0 0 25 22"><path d="M1 9l12-7 10 5c1 2 1 5 0 7l-12 7-9-5c-1-2-2-5-1-7z" fill="#f2f2f2" stroke="#bbb"/><path d="M1 9l10 5 12-7M11 14v7" fill="none" stroke="#bbb"/></svg>
    <div class="w-[31px] h-[30px] ml-[4px] flex items-center justify-center bg-[#c0d2cf] border border-[#a4b8b4]">
      <svg class="w-[25px] h-[25px]"><use href="#blueCube"/></svg>
    </div>
  </div>

  <!-- main area -->
  <div class="flex-1 flex min-h-0">
    <!-- operation navigator behind the dialog -->
    <div class="w-[391px] shrink-0 flex flex-col border-r border-[#9aa5a3] text-[13.5px] text-[#222] whitespace-nowrap overflow-hidden">
      <div class="h-[30px] shrink-0 flex items-center justify-between pr-[16px] pt-[2px]">
        <span class="-ml-[1px] text-[12.5px]">器 - 程序</span>
        <span class="w-[13px] h-[11px] -mt-[2px] border-2 border-black"></span>
      </div>
      <div class="w-[380px] h-[21px] shrink-0 bg-[#f0f0f0] border-b border-[#e0e0e0]"></div>
      <div class="w-[380px] flex-1 flex flex-col border-r border-[#e4e4e4]">
        <div class="h-[20px] shrink-0 leading-[20px] border-b border-[#eee]"><span class="-ml-[6px]">GRAM</span></div>
        <div class="h-[20px] shrink-0 leading-[20px] border-b border-[#eee] bg-[#f8f8f8]">用项</div>
        <div class="h-[20px] shrink-0 leading-[20px] border-b border-[#eee]">PROGR</div>
        <div class="h-[20px] shrink-0 flex items-center border-b border-[#eee] bg-[#f8f8f8] text-[#7a3fd8]"><svg class="w-[15px] h-[15px] mr-[2px] shrink-0"><use href="#camOp"/></svg>CAV</div>
        <div class="h-[20px] shrink-0 flex items-center border-b border-[#eee]"><svg class="w-[15px] h-[15px] mr-[2px] shrink-0"><use href="#camFace"/></svg>FAC</div>
        <div class="h-[20px] shrink-0 flex items-center bg-[#3399ff] border-r-2 border-[#3399ff]"><span class="h-[20px] w-[14px] bg-white flex items-center shrink-0"><svg class="w-[15px] h-[15px]"><use href="#camOp"/></svg></span><span class="pl-[3px] text-white">ZLE</span></div>
        <div class="h-[20px] shrink-0 border-b border-[#eee]"></div>
        <div class="h-[20px] shrink-0 border-b border-[#eee] bg-[#f8f8f8]"></div>
        <div class="h-[20px] shrink-0 border-b border-[#eee]"></div>
        <div class="h-[20px] shrink-0 border-b border-[#eee] bg-[#f8f8f8]"></div>
        <div class="h-[20px] shrink-0 border-b border-[#eee]"></div>
        <div class="h-[20px] shrink-0 border-b border-[#eee] bg-[#f8f8f8]"></div>
        <div class="h-[20px] shrink-0 border-b border-[#eee]"></div>
        <div class="h-[20px] shrink-0 border-b border-[#eee] bg-[#f8f8f8]"></div>
        <div class="h-[20px] shrink-0 border-b border-[#eee]"></div>
        <div class="h-[20px] shrink-0 border-b border-[#eee] bg-[#f8f8f8]"></div>
      </div>
    </div>

    <!-- vertical toolbar -->
    <div class="w-[34px] shrink-0 flex flex-col items-center pt-[5px]">
      <span class="w-[26px] h-0 mb-[2px] border-t-[3px] border-dotted border-[#aaa]"></span>
      <svg class="w-[24px] h-[24px] shrink-0"><use href="#gbox3"/></svg>
      <svg class="w-[24px] h-[24px] mt-[6px] shrink-0"><use href="#gdoc"/></svg>
      <svg class="w-[24px] h-[24px] mt-[10px] shrink-0"><use href="#gmilldoc"/></svg>
      <svg class="w-[24px] h-[24px] mt-[4px] shrink-0"><use href="#gmill"/></svg>
      <svg class="w-[24px] h-[24px] mt-[4px] shrink-0"><use href="#gmill"/></svg>
      <svg class="w-[24px] h-[24px] mt-[8px] shrink-0"><use href="#gmilldoc"/></svg>
      <svg class="w-[24px] h-[24px] mt-[9px] shrink-0"><use href="#gmill"/></svg>
      <svg class="w-[24px] h-[26px] mt-[5px] shrink-0"><use href="#ghatch"/></svg>
      <svg class="w-[24px] h-[24px] mt-[7px] shrink-0"><use href="#gwrmill"/></svg>
      <svg class="w-[24px] h-[24px] mt-[4px] shrink-0"><use href="#gmach"/></svg>
      <svg class="w-[24px] h-[24px] mt-[6px] shrink-0"><use href="#gmilldoc"/></svg>
      <svg class="w-[24px] h-[24px] mt-[6px] shrink-0"><use href="#gtable"/></svg>
      <svg class="w-[24px] h-[24px] mt-[8px] shrink-0"><use href="#gglobe"/></svg>
      <svg class="w-[24px] h-[24px] mt-[8px] shrink-0"><use href="#gapen"/></svg>
      <svg class="w-[24px] h-[24px] mt-[9px] shrink-0"><use href="#gbar"/></svg>
      <svg class="w-[24px] h-[24px] mt-[9px] shrink-0"><use href="#gfold"/></svg>
    </div>

    <!-- graphics window -->
    <div class="flex-1 min-w-0 bg-[#23252a] border-l border-t-2 border-l-[#d9892f] border-t-[#5a5a5a]">
      <svg class="block w-[520px] h-[499px]" viewBox="425 188 520 499" font-family="Liberation Sans" font-size="14">
        <!-- base -->
        <path d="M530 498L592 455L673 463L741 486L657 547L652 548L536 511z" fill="#c9c9c9"/>
        <path d="M536 511L652 548L652 611L535 572z" fill="#636363" stroke="#2a2a2a" stroke-width=".6"/>
        <path d="M530 498L536 511L535 572L530 560z" fill="#858585" stroke="#2a2a2a" stroke-width=".5"/>
        <path d="M652 548L657 547L657 610L652 611z" fill="#7c7c7c" stroke="#2a2a2a" stroke-width=".5"/>
        <path d="M657 547L741 486L741 548L657 610z" fill="#7f7f7f" stroke="#2a2a2a" stroke-width=".6"/>
        <path d="M530 498L536 511L652 548L657 547L741 486" fill="none" stroke="#2a2a2a" stroke-width=".7"/>
        <!-- lower column -->
        <path d="M592 362L637 376L635 515L591 501z" fill="#636363" stroke="#2a2a2a" stroke-width=".6"/>
        <path d="M637 376L673 348L673 488L635 515z" fill="#808080" stroke="#2a2a2a" stroke-width=".6"/>
        <path d="M592 362L628 336L673 348L637 376z" fill="#c9c9c9" stroke="#2a2a2a" stroke-width=".5"/>
        <!-- upper thin column -->
        <path d="M609 272L650 285L650 362L609 350z" fill="#656565" stroke="#2a2a2a" stroke-width=".6"/>
        <path d="M650 285L658 281L657 345L650 362z" fill="#808080" stroke="#2a2a2a" stroke-width=".6"/>
        <path d="M654 283V353" stroke="#3a3a3a" stroke-width=".6"/>
        <path d="M609 272L614 267L658 281L650 285z" fill="#cdcdcd" stroke="#2a2a2a" stroke-width=".5"/>
        <!-- axes -->
        <path d="M634 275V200" stroke="#1440d0" stroke-width="1.500"/>
        <path d="M634 190l4 15h-8zM634 231l3 11-3 12-3-12z" fill="#1440d0"/>
        <path d="M634 275L691 234" stroke="#2f932f" stroke-width="1.500"/>
        <path d="M692 234l-12 4 4 6zM649 265l9-9 6-2-6 9-9 4z" fill="#2f932f"/>
        <path d="M634 275L721 305" stroke="#d03030" stroke-width="1.500"/>
        <path d="M721 305l-19-9-2 6zM658 283l12 0 7 5-12 1z" fill="#d03030"/>
        <text x="615" y="225" fill="#1440d0">ZC</text>
        <text x="645" y="250" fill="#2f8f2f">YC</text>
        <text x="671" y="231" fill="#2f8f2f">YM</text>
        <text x="664" y="305" fill="#c93434">XC</text>
        <text x="702" y="319" fill="#c93434">XM</text>
        <!-- 3DSJW logo -->
        <path d="M698 593L733 613V653L698 673L663 653V613z" fill="#4f83a0"/>
        <path d="M673 607L698 593L733 613L717 622L698 610z" fill="#6f8d9e"/>
        <path d="M663 613L673 607L698 610L682 620L663 643z" fill="#5f8ca6"/>
        <path d="M733 613V653L717 643L717 622z" fill="#2a7399"/>
        <path d="M700 665L717 645L733 653L698 673L682 650z" fill="#136895"/>
        <path d="M682 620C670 624 664 634 663 643M698 610C690 605 682 604 673 607M713 625C714 612 708 600 700 593M717 647C727 640 733 626 733 613M700 665C708 660 714 652 717 643M682 647C682 660 688 668 697 673" fill="none" stroke="#23252a" stroke-width=".9"/>
        <path d="M698 610L717 621.500V645L698 656.500L679 645V621.500z" fill="#23252a"/>
        <path d="M698 615L713 624L698 633L683 624z" fill="#5e8aa2"/>
        <path d="M683 624L698 633V652L683 643z" fill="#3f7a9e"/>
        <path d="M713 624L698 633V652L713 643z" fill="#136895"/>
      </svg>
    </div>
  </div>

  <!-- watermark text -->
  <div class="absolute left-[741px] top-[604px] h-[42px] flex items-baseline font-bold leading-[40px] text-[#8e8f91] whitespace-nowrap">
    <span class="text-[46px]">3D</span><span class="ml-[7px] text-[37px]">世界网</span>
  </div>
  <span class="absolute left-[743px] top-[648px] text-[11px] leading-[14px] font-bold tracking-[2px] origin-left scale-x-[1.35] text-[#8e8f91] whitespace-nowrap [font-family:'Liberation_Sans',sans-serif]">WWW.3DSJW.COM</span>

  <!-- dialog -->
  <div class="absolute left-[39px] top-[102px] w-[328px] h-[600px] bg-[#e6e6e6] border-x border-[#bfc8c6] overflow-hidden flex flex-col">
    <div class="h-[23px] shrink-0 -mx-px bg-[#5c8680] flex items-center text-[13px] text-[#eaf2f0]">
      <svg class="w-[16px] h-[16px] ml-[7px] mr-[9px]" viewBox="0 0 16 16"><path d="M7 1h2l.4 2 1.600.7 1.700-1.100 1.400 1.400-1.100 1.700.7 1.600 2 .4v2l-2 .4-.7 1.600 1.100 1.700-1.400 1.400-1.700-1.100-1.600.7-.4 2H7l-.4-2-1.600-.7-1.700 1.100L1.900 12.500 3 10.800 2.300 9.200.3 8.800v-2l2-.4L3 4.800 1.900 3.100 3.300 1.700 5 2.800l1.600-.7z" fill="#fff" transform="translate(0 .2)"/><circle cx="8" cy="8" r="2.600" fill="#5c8680"/></svg>
      <span class="whitespace-pre">深度轮廓加工 - <span class="text-[13.5px]">[ZLEVEL_PROFILE]</span></span>
      <svg class="w-[12px] h-[12px] ml-auto mr-[9px]" viewBox="0 0 12 12"><path d="M1 1l10 10M11 1L1 11" stroke="#fff" stroke-width="2"/></svg>
    </div>

    <!-- 几何体 -->
    <div class="mx-[5px] mt-[5px] bg-white pb-[7px] border-b border-[#d8d8d8]">
      <div class="h-[30px] flex items-center justify-between pl-[7px] pr-[6px] pb-[4px] text-[14px] text-[#3d98c4]">几何体
        <svg class="w-[12px] h-[8px]" viewBox="0 0 12 8"><path d="M1 7l5-5 5 5" fill="none" stroke="#2a8abc" stroke-width="1.800"/></svg>
      </div>
      <div class="h-[32px] flex pl-[9px] text-[12px]">
        <span class="w-[113px] pt-[4px]">几何体</span>
        <div class="w-[117px] h-[24px] flex items-center justify-between border border-[#a8a8a8] pl-[4px] pr-[6px] text-[12.5px] text-[#333]">WORKPIECE<span class="w-0 h-0 border-x-[4px] border-t-[4px] border-x-transparent border-t-[#222]"></span></div>
        <button class="w-[32px] h-[32px] ml-[2px] flex items-center justify-center border border-[#a8a8a8]"><svg class="w-[24px] h-[26px]"><use href="#geoNew"/></svg></button>
        <button class="w-[32px] h-[32px] ml-[2px] flex items-center justify-center border border-[#a8a8a8]"><svg class="w-[26px] h-[26px]"><use href="#wrench"/></svg></button>
      </div>
      <div class="h-[32px] mt-[2px] flex pl-[9px] text-[12px]">
        <span class="w-[232px] pt-[10px]">指定部件</span>
        <button class="w-[32px] h-[32px] flex items-center justify-center border border-[#d4d4d4]"><svg class="w-[24px] h-[24px]"><use href="#blockG"/></svg></button>
        <button class="w-[32px] h-[32px] ml-[2px] flex items-center justify-center border border-[#a8a8a8]"><svg class="w-[24px] h-[24px]"><use href="#lamp1"/></svg></button>
      </div>
      <div class="h-[32px] mt-[2px] flex pl-[9px] text-[12px]">
        <span class="w-[232px] pt-[10px]">指定检查</span>
        <button class="w-[32px] h-[32px] flex items-center justify-center border border-[#a8a8a8]"><svg class="w-[26px] h-[24px]"><use href="#redPart"/></svg></button>
        <button class="w-[32px] h-[32px] ml-[2px] flex items-center justify-center border border-[#d4d4d4]"><svg class="w-[24px] h-[24px]"><use href="#lamp0"/></svg></button>
      </div>
      <div class="h-[32px] mt-[2px] flex pl-[9px] text-[12px]">
        <span class="w-[232px] pt-[10px]">指定切削区域</span>
        <button class="w-[32px] h-[32px] flex items-center justify-center border border-[#a8a8a8]"><svg class="w-[24px] h-[24px]"><use href="#surf"/></svg></button>
        <button class="w-[32px] h-[32px] ml-[2px] flex items-center justify-center border border-[#a8a8a8]"><svg class="w-[24px] h-[24px]"><use href="#lamp1"/></svg></button>
      </div>
      <div class="h-[32px] mt-[2px] flex pl-[9px] text-[12px]">
        <span class="w-[232px] pt-[10px]">指定修剪边界</span>
        <button class="w-[32px] h-[32px] flex items-center justify-center border border-[#a8a8a8]"><svg class="w-[24px] h-[24px]"><use href="#trim"/></svg></button>
        <button class="w-[32px] h-[32px] ml-[2px] flex items-center justify-center border border-[#d4d4d4]"><svg class="w-[24px] h-[24px]"><use href="#lamp0"/></svg></button>
      </div>
    </div>

    <!-- 工具 -->
    <div class="mx-[5px] mt-[4px] bg-white pb-[7px] border-b border-[#d8d8d8]">
      <div class="h-[30px] flex items-center justify-between pl-[7px] pr-[6px] pb-[4px] text-[14px] text-[#3d98c4]">工具
        <svg class="w-[12px] h-[8px]" viewBox="0 0 12 8"><path d="M1 7l5-5 5 5" fill="none" stroke="#2a8abc" stroke-width="1.800"/></svg>
      </div>
      <div class="h-[32px] flex pl-[9px] text-[12px]">
        <span class="w-[113px] pt-[4px]">刀具</span>
        <div class="w-[117px] h-[25px] flex items-center justify-between border border-[#a8a8a8] pl-[4px] pr-[6px] text-[12px] text-[#333] whitespace-nowrap overflow-hidden">D6R0.5 (铣刀-5 ⋮<span class="w-0 h-0 ml-[2px] border-x-[4px] border-t-[4px] border-x-transparent border-t-[#222]"></span></div>
        <button class="w-[32px] h-[32px] ml-[2px] flex items-center justify-center border border-[#a8a8a8]"><svg class="w-[24px] h-[26px]"><use href="#toolNew"/></svg></button>
        <button class="w-[32px] h-[32px] ml-[2px] flex items-center justify-center border border-[#a8a8a8]"><svg class="w-[26px] h-[26px]"><use href="#toolEdit"/></svg></button>
      </div>
      <div class="h-[24px] mt-[2px] ml-[9px] mr-[9px] flex items-center justify-between pl-[8px] pr-[5px] bg-[#eef4f4] border border-[#d0d4d4] text-[12px] text-[#4a9cc4]">输出
        <svg class="w-[10px] h-[7px]" viewBox="0 0 10 7"><path d="M1 1l4 4 4-4" fill="none" stroke="#2a8abc" stroke-width="1.600"/></svg>
      </div>
      <div class="h-[24px] mt-[2px] ml-[9px] mr-[9px] flex items-center justify-between pl-[8px] pr-[5px] bg-[#eef4f4] border border-[#d0d4d4] text-[12px] text-[#4a9cc4]">换刀设置
        <svg class="w-[10px] h-[7px]" viewBox="0 0 10 7"><path d="M1 1l4 4 4-4" fill="none" stroke="#2a8abc" stroke-width="1.600"/></svg>
      </div>
    </div>

    <!-- 刀轴 -->
    <div class="mx-[5px] mt-[4px] h-[23px] bg-white flex items-center justify-between pl-[7px] pr-[6px] text-[14px] text-[#3d98c4] border-b border-[#d8d8d8]">刀轴
      <svg class="w-[12px] h-[8px]" viewBox="0 0 12 8"><path d="M1 1l5 5 5-5" fill="none" stroke="#2a8abc" stroke-width="1.800"/></svg>
    </div>

    <!-- 刀轨设置 -->
    <div class="mx-[5px] mt-[4px] bg-white flex-1">
      <div class="h-[30px] flex items-center justify-between pl-[7px] pr-[6px] pb-[4px] text-[14px] text-[#3d98c4]">刀轨设置
        <svg class="w-[12px] h-[8px]" viewBox="0 0 12 8"><path d="M1 7l5-5 5 5" fill="none" stroke="#2a8abc" stroke-width="1.800"/></svg>
      </div>
      <div class="h-[32px] flex pl-[9px] text-[12px]">
        <span class="w-[113px] pt-[4px]">方法</span>
        <div class="w-[117px] h-[25px] flex items-center justify-between border border-[#a8a8a8] pl-[4px] pr-[6px] text-[12.5px] text-[#333]">METHOD<span class="w-0 h-0 border-x-[4px] border-t-[4px] border-x-transparent border-t-[#222]"></span></div>
        <button class="w-[32px] h-[32px] ml-[2px] flex items-center justify-center border border-[#a8a8a8]"><svg class="w-[25px] h-[25px]"><use href="#method"/></svg></button>
        <button class="w-[32px] h-[32px] ml-[2px] flex items-center justify-center border border-[#d4d4d4]"><svg class="w-[26px] h-[26px]"><use href="#wrenchG"/></svg></button>
      </div>
      <div class="h-[25px] mt-[2px] flex items-center pl-[9px] text-[12px]">
        <span class="w-[157px]">陡峭空间范围</span>
        <div class="w-[141px] h-[25px] flex items-center justify-between border border-[#a8a8a8] pl-[4px] pr-[6px] text-[#333]">无<span class="w-0 h-0 border-x-[4px] border-t-[4px] border-x-transparent border-t-[#222]"></span></div>
      </div>
      <div class="h-[24px] mt-[2px] flex items-center pl-[9px] text-[12px]">
        <span class="w-[151px]">合并距离</span>
        <div class="w-[82px] h-[24px] flex items-center border border-[#a8a8a8] px-[3px]">
          <span class="w-full h-[17px] pl-[18px] overflow-hidden bg-[#3399ff] text-white text-[15px] leading-[17px] tracking-[1.5px] whitespace-nowrap">3. 00000</span>
        </div>
        <div class="w-[63px] h-[24px] ml-[2px] flex items-center justify-between border border-[#a8a8a8] pl-[4px] pr-[6px] text-[13px] text-[#333]">mm<span class="w-0 h-0 border-x-[4px] border-t-[4px] border-x-transparent border-t-[#222]"></span></div>
      </div>
      <div class="h-[23px] mt-[3px] flex items-center pl-[9px] text-[12px]">
        <span class="w-[151px]">最小切削长度</span>
        <div class="w-[82px] h-[23px] flex items-center border border-[#a8a8a8] px-[3px]">
          <span class="w-full pl-[18px] overflow-hidden text-[#555] text-[15px] leading-[17px] tracking-[1.5px] whitespace-nowrap">1. 00000</span>
        </div>
        <div class="w-[63px] h-[24px] ml-[2px] flex items-center justify-between border border-[#a8a8a8] pl-[4px] pr-[6px] text-[13px] text-[#333]">mm<span class="w-0 h-0 border-x-[4px] border-t-[4px] border-x-transparent border-t-[#222]"></span></div>
      </div>
      <div class="h-[25px] mt-[4px] flex items-center pl-[9px] text-[12px]">
        <span class="w-[157px]">公共每刀切削深度</span>
        <div class="w-[141px] h-[25px] flex items-center justify-between border border-[#a8a8a8] pl-[4px] pr-[6px] text-[#333]">恒定<span class="w-0 h-0 border-x-[4px] border-t-[4px] border-x-transparent border-t-[#222]"></span></div>
      </div>
      <div class="h-[24px] mt-[2px] flex items-center pl-[9px] text-[12px]">
        <span class="w-[151px]">最大距离</span>
        <div class="w-[82px] h-[24px] flex items-center border border-[#a8a8a8] px-[3px]">
          <span class="w-full pl-[18px] overflow-hidden text-[#555] text-[15px] leading-[17px] tracking-[1.5px] whitespace-nowrap">0. 15000</span>
        </div>
        <div class="w-[63px] h-[24px] ml-[2px] flex items-center justify-between border border-[#a8a8a8] pl-[4px] pr-[6px] text-[13px] text-[#333]">mm<span class="w-0 h-0 border-x-[4px] border-t-[4px] border-x-transparent border-t-[#222]"></span></div>
      </div>
    </div>
  </div>

  <!-- callout -->
  <svg class="absolute inset-0 w-[945px] h-[687px] pointer-events-none" viewBox="0 0 945 687">
    <path d="M323 282L350 287L345 295L434 357L432 360L339 301L328 310z" fill="#e8463c"/>
  </svg>
  <div class="absolute left-[458px] top-[339px] w-[186px] h-[44px] rounded-[3px] bg-black/70 text-white text-[24px] leading-[44px] pl-[6px] whitespace-nowrap">选择要加工的面</div>
  <div class="absolute left-[429px] top-[351px] w-[20px] h-[20px] rounded-full bg-[#d9302c] text-white text-[11px] leading-[20px] text-center">1</div>
</div>
</body>
</html>
